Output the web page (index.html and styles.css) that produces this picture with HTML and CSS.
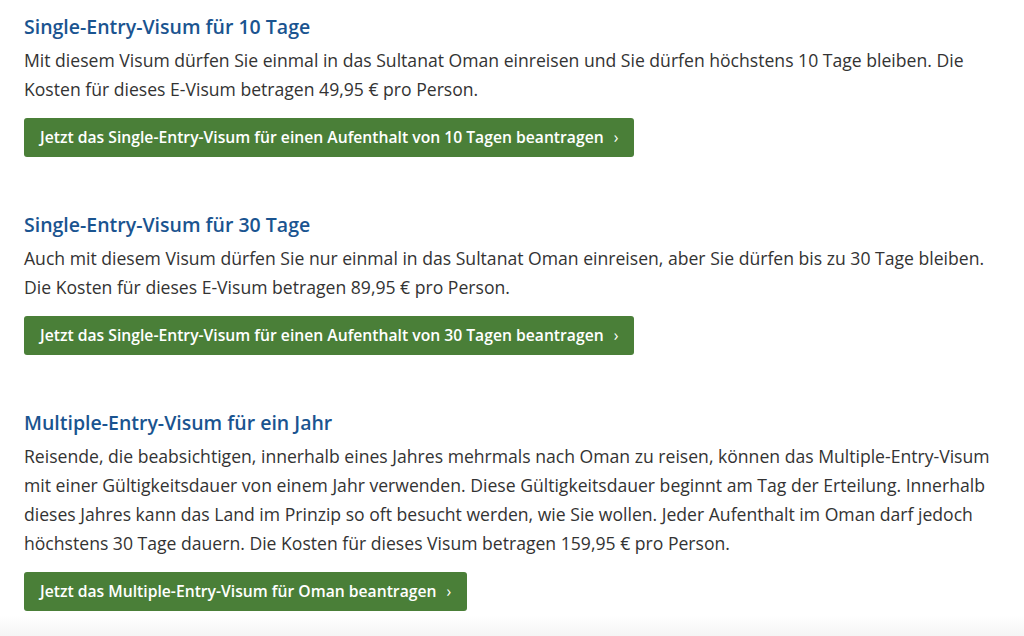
FILE: index.html
```html
<!DOCTYPE html>
<html lang="de">
<head>
    <meta charset="UTF-8">
    <meta name="viewport" content="width=device-width, initial-scale=1.0">
    <title>Visum Oman</title>
    <link rel="stylesheet" href="styles.css">
</head>
<body>
    <div class="content">
        <div class="visa-block">
            <h3 class="visa-title">Single-Entry-Visum für 10 Tage</h3>
            <p class="visa-text">Mit diesem Visum dürfen Sie einmal in das Sultanat Oman einreisen und Sie dürfen höchstens 10 Tage bleiben. Die Kosten für dieses E-Visum betragen 49,95 € pro Person.</p>
            <a href="#" class="apply-btn">Jetzt das Single-Entry-Visum für einen Aufenthalt von 10 Tagen beantragen <span class="chev">›</span></a>
        </div>

        <div class="visa-block">
            <h3 class="visa-title">Single-Entry-Visum für 30 Tage</h3>
            <p class="visa-text">Auch mit diesem Visum dürfen Sie nur einmal in das Sultanat Oman einreisen, aber Sie dürfen bis zu 30 Tage bleiben. Die Kosten für dieses E-Visum betragen 89,95 € pro Person.</p>
            <a href="#" class="apply-btn">Jetzt das Single-Entry-Visum für einen Aufenthalt von 30 Tagen beantragen <span class="chev">›</span></a>
        </div>

        <div class="visa-block">
            <h3 class="visa-title">Multiple-Entry-Visum für ein Jahr</h3>
            <p class="visa-text">Reisende, die beabsichtigen, innerhalb eines Jahres mehrmals nach Oman zu reisen, können das Multiple-Entry-Visum mit einer Gültigkeitsdauer von einem Jahr verwenden. Diese Gültigkeitsdauer beginnt am Tag der Erteilung. Innerhalb dieses Jahres kann das Land im Prinzip so oft besucht werden, wie Sie wollen. Jeder Aufenthalt im Oman darf jedoch höchstens 30 Tage dauern. Die Kosten für dieses Visum betragen 159,95 € pro Person.</p>
            <a href="#" class="apply-btn">Jetzt das Multiple-Entry-Visum für Oman beantragen <span class="chev">›</span></a>
        </div>
    </div>
    <div class="page-fade"></div>
</body>
</html>
```

FILE: styles.css
```css
:root {
    --title-blue: #1a5490;
    --text-color: #333;
    --btn-green: #4a7f38;
}

body {
    margin: 0;
    font-family: 'Open Sans', 'Noto Sans', sans-serif;
    color: var(--text-color);
    background: #fff;
}

.content {
    padding: 14px 24px 0 24px;
    max-width: 976px;
}

.visa-block {
    margin-bottom: 55px;
}

.visa-block:last-child {
    margin-bottom: 0;
}

.visa-title {
    margin: 0 0 6px 0;
    font-size: 19.5px;
    line-height: 26px;
    font-weight: 600;
    color: var(--title-blue);
}

.visa-text {
    margin: 0 0 14px 0;
    font-size: 17.6px;
    line-height: 29px;
}

.apply-btn {
    display: inline-block;
    background-color: var(--btn-green);
    color: #fff;
    text-decoration: none;
    font-size: 15.7px;
    line-height: 19px;
    font-weight: 600;
    padding: 10px 16px;
    border-radius: 3px;
}

.chev {
    margin-left: 6px;
    font-weight: 400;
}

.page-fade {
    margin-top: 5px;
    height: 21px;
    background: linear-gradient(#fff, #f4f4f4);
}
```
